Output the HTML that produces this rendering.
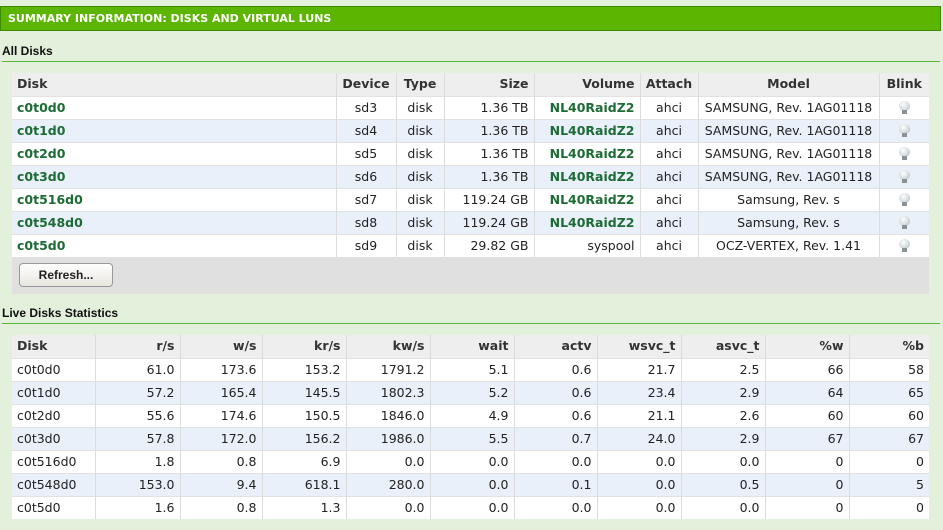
<!DOCTYPE html><html><head><style>
body{margin:0;width:943px;height:530px;background:#e2f0dc;font-family:"DejaVu Sans",Verdana,sans-serif;font-size:12.5px;color:#222;overflow:hidden;position:relative}
.bar{position:absolute;left:0;top:6px;height:25px;background:#5cb500;border:1px solid #3d8a00;color:#fff;font-weight:bold;font-size:11px;line-height:23px;padding-left:7px;box-sizing:border-box;width:941px}
.h{position:absolute;left:2px;font-family:"Liberation Sans",Arial,sans-serif;font-weight:bold;font-size:12px;color:#111}
.line{position:absolute;left:2px;width:938px;height:1px;background:#5cb53a}
table{position:absolute;left:12px;border-collapse:collapse;table-layout:fixed}
td,th{height:22px;line-height:22px;padding:0 5px;border-left:1px solid #dcdcdc;white-space:nowrap;overflow:hidden;box-sizing:border-box}
td:first-child,th:first-child{border-left:none}
th{background:#eeeeee;color:#333;font-weight:bold;height:23px}
tr.o td{background:#fff}tr.e td{background:#e9f0fa}
tr td{border-top:1px solid #e2e2e2;height:23px}
.r{text-align:right}.c{text-align:center}.l{text-align:left}
.g{color:#1d6b35;font-weight:bold}
.panel{position:absolute;left:12px;top:257px;width:917px;height:37px;background:#e0e0e0}
.btn{position:absolute;left:7px;top:6px;width:92px;height:22px;border:1px solid #999;border-radius:4px;background:linear-gradient(#fff,#e8e6e0);font-size:12px;font-weight:bold;font-family:"Liberation Sans",Arial,sans-serif;text-align:center;line-height:22px;color:#222}
.bulb{display:inline-block;width:11px;height:10px;border-radius:50%;background:radial-gradient(circle at 40% 35%,#fff,#cfd8dc 60%,#98a4aa);position:relative;top:-2px;vertical-align:middle}
.bulb:after{content:"";position:absolute;left:3px;top:9px;width:5px;height:4px;background:#8a9296}
</style></head><body>
<div class="bar">SUMMARY INFORMATION: DISKS AND VIRTUAL LUNS</div>
<div class="h" style="top:44px">All Disks</div>
<div class="line" style="top:61px"></div>
<table style="top:73px;width:917px">
<colgroup><col style="width:324px"><col style="width:60px"><col style="width:48px"><col style="width:90px"><col style="width:106px"><col style="width:58px"><col style="width:181px"><col style="width:50px"></colgroup>
<tr><th class="l">Disk</th><th class="c">Device</th><th class="c">Type</th><th class="r">Size</th><th class="r">Volume</th><th class="c">Attach</th><th class="c">Model</th><th class="c">Blink</th></tr>
<tr class="o"><td class="g">c0t0d0</td><td class="c">sd3</td><td class="c">disk</td><td class="r">1.36 TB</td><td class="r g">NL40RaidZ2</td><td class="c">ahci</td><td class="c">SAMSUNG, Rev. 1AG01118</td><td class="c"><span class="bulb"></span></td></tr>
<tr class="e"><td class="g">c0t1d0</td><td class="c">sd4</td><td class="c">disk</td><td class="r">1.36 TB</td><td class="r g">NL40RaidZ2</td><td class="c">ahci</td><td class="c">SAMSUNG, Rev. 1AG01118</td><td class="c"><span class="bulb"></span></td></tr>
<tr class="o"><td class="g">c0t2d0</td><td class="c">sd5</td><td class="c">disk</td><td class="r">1.36 TB</td><td class="r g">NL40RaidZ2</td><td class="c">ahci</td><td class="c">SAMSUNG, Rev. 1AG01118</td><td class="c"><span class="bulb"></span></td></tr>
<tr class="e"><td class="g">c0t3d0</td><td class="c">sd6</td><td class="c">disk</td><td class="r">1.36 TB</td><td class="r g">NL40RaidZ2</td><td class="c">ahci</td><td class="c">SAMSUNG, Rev. 1AG01118</td><td class="c"><span class="bulb"></span></td></tr>
<tr class="o"><td class="g">c0t516d0</td><td class="c">sd7</td><td class="c">disk</td><td class="r">119.24 GB</td><td class="r g">NL40RaidZ2</td><td class="c">ahci</td><td class="c">Samsung, Rev. s</td><td class="c"><span class="bulb"></span></td></tr>
<tr class="e"><td class="g">c0t548d0</td><td class="c">sd8</td><td class="c">disk</td><td class="r">119.24 GB</td><td class="r g">NL40RaidZ2</td><td class="c">ahci</td><td class="c">Samsung, Rev. s</td><td class="c"><span class="bulb"></span></td></tr>
<tr class="o"><td class="g">c0t5d0</td><td class="c">sd9</td><td class="c">disk</td><td class="r">29.82 GB</td><td class="r">syspool</td><td class="c">ahci</td><td class="c">OCZ-VERTEX, Rev. 1.41</td><td class="c"><span class="bulb"></span></td></tr>
</table>
<div class="panel"><div class="btn">Refresh...</div></div>
<div class="h" style="top:306px">Live Disks Statistics</div>
<div class="line" style="top:323px"></div>
<table style="top:335px;width:917px">
<colgroup><col style="width:83px"><col style="width:85px"><col style="width:82px"><col style="width:84px"><col style="width:84px"><col style="width:84px"><col style="width:83px"><col style="width:84px"><col style="width:84px"><col style="width:84px"><col style="width:80px"></colgroup>
<tr><th class="l">Disk</th><th class="r">r/s</th><th class="r">w/s</th><th class="r">kr/s</th><th class="r">kw/s</th><th class="r">wait</th><th class="r">actv</th><th class="r">wsvc_t</th><th class="r">asvc_t</th><th class="r">%w</th><th class="r">%b</th></tr>
<tr class="o"><td>c0t0d0</td><td class="r">61.0</td><td class="r">173.6</td><td class="r">153.2</td><td class="r">1791.2</td><td class="r">5.1</td><td class="r">0.6</td><td class="r">21.7</td><td class="r">2.5</td><td class="r">66</td><td class="r">58</td></tr>
<tr class="e"><td>c0t1d0</td><td class="r">57.2</td><td class="r">165.4</td><td class="r">145.5</td><td class="r">1802.3</td><td class="r">5.2</td><td class="r">0.6</td><td class="r">23.4</td><td class="r">2.9</td><td class="r">64</td><td class="r">65</td></tr>
<tr class="o"><td>c0t2d0</td><td class="r">55.6</td><td class="r">174.6</td><td class="r">150.5</td><td class="r">1846.0</td><td class="r">4.9</td><td class="r">0.6</td><td class="r">21.1</td><td class="r">2.6</td><td class="r">60</td><td class="r">60</td></tr>
<tr class="e"><td>c0t3d0</td><td class="r">57.8</td><td class="r">172.0</td><td class="r">156.2</td><td class="r">1986.0</td><td class="r">5.5</td><td class="r">0.7</td><td class="r">24.0</td><td class="r">2.9</td><td class="r">67</td><td class="r">67</td></tr>
<tr class="o"><td>c0t516d0</td><td class="r">1.8</td><td class="r">0.8</td><td class="r">6.9</td><td class="r">0.0</td><td class="r">0.0</td><td class="r">0.0</td><td class="r">0.0</td><td class="r">0.0</td><td class="r">0</td><td class="r">0</td></tr>
<tr class="e"><td>c0t548d0</td><td class="r">153.0</td><td class="r">9.4</td><td class="r">618.1</td><td class="r">280.0</td><td class="r">0.0</td><td class="r">0.1</td><td class="r">0.0</td><td class="r">0.5</td><td class="r">0</td><td class="r">5</td></tr>
<tr class="o"><td>c0t5d0</td><td class="r">1.6</td><td class="r">0.8</td><td class="r">1.3</td><td class="r">0.0</td><td class="r">0.0</td><td class="r">0.0</td><td class="r">0.0</td><td class="r">0.0</td><td class="r">0</td><td class="r">0</td></tr>
</table>
</body></html>
